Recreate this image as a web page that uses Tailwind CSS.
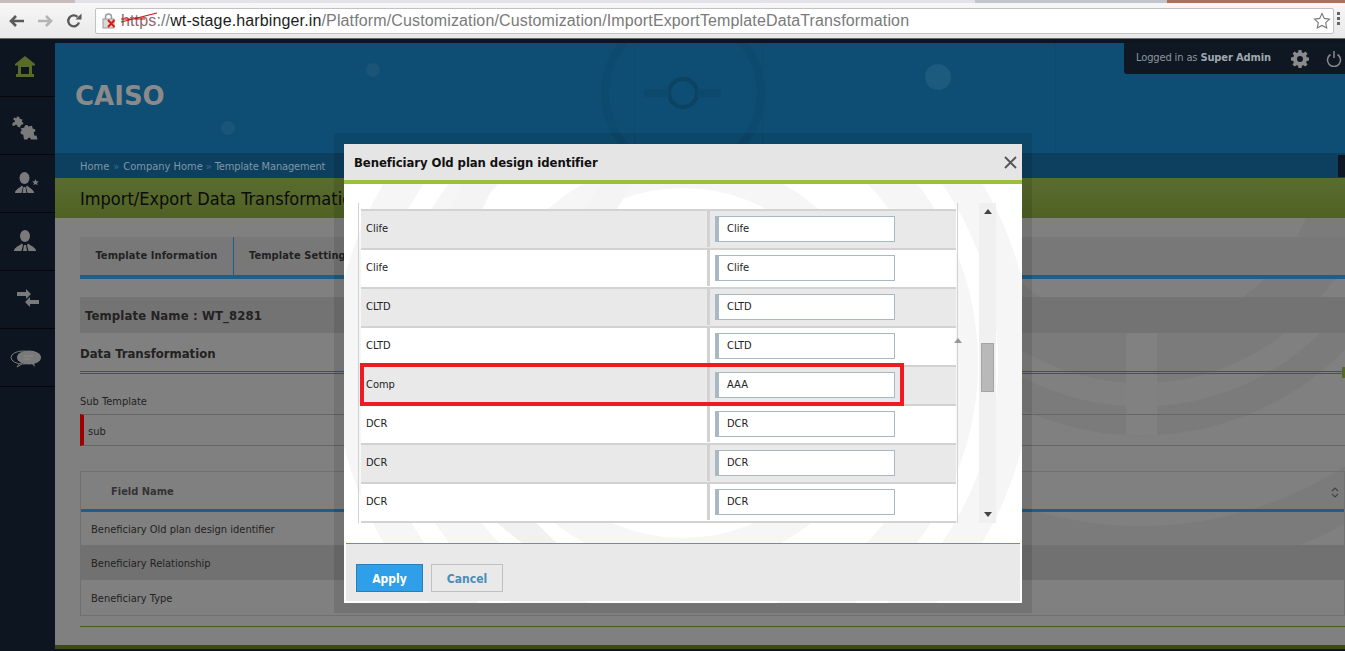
<!DOCTYPE html>
<html>
<head>
<meta charset="utf-8">
<script src="https://cdn.jsdelivr.net/npm/@tailwindcss/browser@4"></script>
</head>
<body class="m-0 overflow-hidden bg-[#0c1520] font-['DejaVu_Sans_Condensed','DejaVu_Sans',sans-serif]">
<div class="relative flex h-[651px] w-[1345px] flex-col overflow-hidden">
  <!-- browser chrome -->
  <header class="relative flex h-[39px] shrink-0 items-start bg-gradient-to-b from-[#f8f8f8] to-[#e9e9e9] pt-[8px] pl-[8px] border-b border-[#6a6a6a]">
    <div class="absolute left-0 right-0 top-0 flex h-[3px]">
      <div class="w-[75px] bg-[#c9bcbc]"></div><div class="w-[900px] bg-[#e2e2e8]"></div><div class="w-[192px] bg-[#c4c4cc]"></div><div class="flex-1 bg-[#a9705a]"></div>
    </div>
    <div class="flex h-[25px] w-[87px] items-center gap-[12px]">
      <svg width="17" height="14" viewBox="0 0 17 14"><path d="M16 7H4M8 2 3 7l5 5" fill="none" stroke="#5a5a5a" stroke-width="2.6"/></svg>
      <svg width="17" height="14" viewBox="0 0 17 14"><path d="M1 7h12M9 2l5 5-5 5" fill="none" stroke="#b4b4b4" stroke-width="2.6"/></svg>
      <svg width="16" height="16" viewBox="0 0 16 16"><path d="M13 9.500A5.500 5.500 0 1 1 11.500 3.800" fill="none" stroke="#5a5a5a" stroke-width="2.400"/><path d="M9.500 6.500h6v-6z" fill="#5a5a5a"/></svg>
    </div>
    <div class="flex h-[26px] w-[1239px] items-center rounded-[2px] border border-[#c2c2c2] bg-white pl-[6px] font-['Liberation_Sans',sans-serif] text-[16px] tracking-[0.135px] text-[#7a7a7a]">
      <svg class="shrink-0" width="17" height="17" viewBox="0 0 17 17"><rect x="1" y="6" width="11" height="9" fill="#d8d8d8" stroke="#9a9a9a"/><path d="M3.500 6V4a3 3 0 0 1 6 0v2" fill="none" stroke="#9a9a9a" stroke-width="1.500"/><path d="m6 7 6.500 7M12.500 7 6 14" stroke="#d81c1c" stroke-width="2"/></svg>
      <span class="relative ml-[2px] text-[#8c6a6a]">https<svg class="absolute left-0 top-[1px]" width="38" height="16" viewBox="0 0 38 16"><path d="M0 12 36 3M0 9h24" stroke="#c41616" stroke-width="1.200" fill="none"/></svg></span><span>://</span><span class="text-[#1c1c1c]">wt-stage.harbinger.in</span><span>/Platform/Customization/Customization/ImportExportTemplateDataTransformation</span>
      <svg class="ml-auto mr-[2px]" width="18" height="18" viewBox="0 0 18 18"><path d="m9 1.500 2.300 4.900 5.200.7-3.800 3.600 1 5.300L9 13.400l-4.700 2.600 1-5.300L1.500 7.100l5.200-.7z" fill="none" stroke="#777" stroke-width="1.100"/></svg>
    </div>
    <div class="ml-[3px] mt-[4px] flex flex-col gap-[2px]"><i class="block h-[3px] w-[3px] bg-[#666]"></i><i class="block h-[3px] w-[3px] bg-[#666]"></i><i class="block h-[3px] w-[3px] bg-[#666]"></i></div>
  </header>

  <div class="flex min-h-0 flex-1">
    <!-- sidebar -->
    <aside class="flex w-[55px] shrink-0 flex-col bg-[#0c1520]">
      <div class="flex h-[58px] items-center justify-center border-b border-[#04080c] pr-[5px] pb-[3px]">
        <svg width="20" height="21" viewBox="0 0 20 21"><path d="M10 0 0 8v1.500h20V8z" fill="#596b28"/><path d="M3 9h14v9h-3v-7H6v7H3z" fill="#596b28"/><rect x="1" y="18" width="18" height="3" fill="#596b28"/></svg>
      </div>
      <div class="flex h-[58px] items-center justify-center border-b border-[#04080c] pr-[5px] pt-[3px]">
        <svg width="28" height="26" viewBox="0 0 28 26" fill="#7a7a7a">
          <path d="M3 3.500 5.500 4.200C5.500 1.800 8.800 2 8.700 4.800L11.500 5.600 10.800 8C13 8 13 11 10 10.800L9 13.500 6.500 12.700C6.700 10.500 3.600 10.300 3.500 12L1 11.200 2 8.500C4.500 8.800 4.700 6 2.300 5.800z"/>
          <path d="M9.500 14.500 13.500 13.500C12.800 11 16.800 10 17.200 12.600L21 11.700 21.800 14.800C24.500 14 25.500 17.800 22.600 18.300L23.500 21.800 25.500 21.500 26.500 25.500 19.800 25.500C20 23.200 16.500 23.300 16.500 25.500L13 25.500 12.200 20.500C9.500 21 8.500 17 11 16.500z"/>
        </svg>
      </div>
      <div class="flex h-[58px] items-center justify-center border-b border-[#04080c] pr-px pb-[2px]">
        <svg width="25" height="22" viewBox="0 0 25 22" fill="#7a7a7a"><ellipse cx="9.500" cy="6" rx="5" ry="6"/><path d="M0 21c0-3 3-4 7-7.500l1 1.500-1.500 6zM19 21c0-3-3-4-7-7.500l-1 1.500 1.500 6zM8.500 15h2l1 6h-4z"/><path d="m20.500 7 1 2.200 2.300.2-1.800 1.500.6 2.300-2.100-1.200-2.100 1.200.6-2.300-1.800-1.500 2.300-.2z"/></svg>
      </div>
      <div class="flex h-[58px] items-center justify-center border-b border-[#04080c] pr-[6px] pb-[3px]">
        <svg width="22" height="21" viewBox="0 0 22 21" fill="#7a7a7a"><ellipse cx="11" cy="6" rx="5" ry="6"/><path d="M0 21c0-3 3-4 8-7.500l1 1.500-1.500 6zM22 21c0-3-3-4-8-7.500l-1 1.500 1.500 6zM10 15h2l1 6h-4z"/></svg>
      </div>
      <div class="flex h-[58px] items-center justify-center border-b border-[#04080c] pl-px pb-[3px]">
        <svg width="22" height="18" viewBox="0 0 22 18" fill="#7a7a7a"><path d="M0 3h9V0l5 5-5 5V7H0z"/><path d="M22 11h-9V8l-5 5 5 5v-3h9z"/></svg>
      </div>
      <div class="flex h-[58px] items-center justify-center border-b border-[#04080c] pr-[4px] pt-[3px]">
        <svg width="32" height="18" viewBox="0 0 32 18"><ellipse cx="13" cy="7.500" rx="12" ry="6.500" fill="none" stroke="#7a7a7a"/><path d="M9 14 7 17l5-3" fill="none" stroke="#7a7a7a"/><ellipse cx="19" cy="7.500" rx="12" ry="7" fill="#7a7a7a"/><path d="m22 14 3 3-1-4z" fill="#7a7a7a"/><path d="M14 6h9M14 9h6" stroke="#8c8c8c"/></svg>
      </div>
    </aside>

    <!-- main -->
    <main class="relative flex min-w-0 flex-1 flex-col bg-[#808080]">
      <div class="h-[4px] shrink-0 bg-[#0c1520]"></div>
      <!-- header band -->
      <section class="relative flex h-[110px] shrink-0 items-start overflow-hidden bg-[#0e4e74] pl-[20px] pt-[34px]">
        <svg class="absolute left-0 top-0" width="1290" height="110" viewBox="0 0 1290 110"><circle cx="628" cy="50" r="78" fill="none" stroke="#0d4a6f" stroke-width="8"/><circle cx="628" cy="50" r="14" fill="none" stroke="#0c4262" stroke-width="4"/><path d="M589 46h25v8h-25zM642 46h24v8h-24z" fill="#0d496c"/><path d="M579 0h1v110h-1zM707 0h1v110h-1zM1000 0h1v110h-1z" fill="#0d4a6e"/></svg>
        <i class="absolute left-[311px] top-[20px] block h-[14px] w-[14px] rounded-full bg-[#1a5578]"></i>
        <i class="absolute left-[166px] top-[78px] block h-[14px] w-[14px] rounded-full bg-[#1a5578]"></i>
        <i class="absolute left-[870px] top-[21px] block h-[26px] w-[26px] rounded-full bg-[#1c5a7e]"></i>
        <h1 class="relative font-['DejaVu_Sans',sans-serif] text-[26px] font-bold leading-[38px] text-[#8a8a8a]">CAISO</h1>
        <div class="absolute right-0 top-0 flex h-[31px] w-[221px] items-center rounded-bl-[3px] bg-[#0e1722] pl-[12px] text-[11px] tracking-[-0.12px] text-[#8c96a0]">
          <span>Logged in as <b class="text-[#a0a8b0]">Super Admin</b></span>
          <svg class="ml-[20px] shrink-0" width="18" height="18" viewBox="0 0 18 18"><path fill="#8a8a8a" fill-rule="evenodd" d="M7.500 0h3l.4 2.400 1.500.6 2-1.400 2.100 2.100-1.400 2 .6 1.500 2.300.4v3l-2.300.4-.6 1.500 1.400 2-2.100 2.100-2-1.400-1.500.6-.4 2.300h-3l-.4-2.300-1.500-.6-2 1.400-2.100-2.100 1.400-2-.6-1.500L0 10.500v-3l2.400-.4.6-1.500-1.400-2 2.100-2.100 2 1.400 1.500-.6zM9 6a3 3 0 1 0 0 6 3 3 0 0 0 0-6z"/></svg>
          <svg class="ml-[17px] shrink-0" width="16" height="17" viewBox="0 0 16 17"><path d="M4.500 4.500a6.500 6.500 0 1 0 7 0M8 1v7" fill="none" stroke="#8a8a8a" stroke-width="1.500"/></svg>
        </div>
      </section>
      <!-- breadcrumb -->
      <nav class="flex h-[25px] shrink-0 items-center bg-[#0d3f5e] pl-[25px] pt-[3px] text-[11px] text-[#7d97a8]">
        <span>Home</span><span class="mx-[4px] text-[#3f6d84]">»</span><span>Company Home</span><span class="mx-[3px] text-[#3f6d84]">»</span><span class="tracking-[-0.15px]">Template Management</span>
        <i class="ml-auto block h-full w-[7px] -mt-[3px] bg-[#0e1722]"></i>
      </nav>
      <!-- title -->
      <div class="flex h-[40px] shrink-0 items-center bg-gradient-to-b from-[#5b6c30] to-[#4f6123] pl-[25px] pt-[1px] text-[18px] text-[#0b0b0b]">Import/Export Data Transformation</div>

      <!-- content -->
      <div class="relative flex min-h-0 flex-1 flex-col overflow-hidden pl-[25px]">
        <svg class="absolute left-0 top-0" width="1290" height="433" viewBox="55 218 1290 433"><circle cx="1141" cy="151" r="205" fill="none" stroke="#7b7b7b" stroke-width="54"/><circle cx="1141" cy="151" r="270" fill="none" stroke="#7b7b7b" stroke-width="29"/><circle cx="1141" cy="151" r="400" fill="none" stroke="#7b7b7b" stroke-width="50"/><rect x="1126" y="333" width="31" height="102" fill="#818181"/></svg>
        <div class="relative mt-[19px] flex h-[42px] shrink-0 border-b-4 border-[#1f5e87] bg-[#787878] pt-px text-[11px] font-bold tracking-[0.1px] text-[#222]">
          <div class="flex w-[154px] items-center justify-center border-r border-[#1f5e87] -mt-px pt-px">Template Information</div>
          <div class="flex items-center pl-[15px]">Template Settings</div>
        </div>
        <div class="relative mt-[18px] flex h-[36px] shrink-0 items-center bg-[#737373] pl-[5px] pt-px text-[13px] font-bold tracking-[0.13px] text-[#222]">Template Name : WT_8281</div>
        <h2 class="relative mt-[12px] h-[18px] shrink-0 pt-px text-[13px] font-bold leading-[16px] text-[#222]">Data Transformation</h2>
        <div class="relative mt-[8px] h-[3px] shrink-0 border-y border-[#4b5b1e]"><i class="absolute right-0 top-[-5px] block h-[11px] w-[3px] bg-[#55691f]"></i></div>
        <div class="relative mt-[21px] h-[14px] shrink-0 text-[11px] leading-[14px] text-[#222]">Sub Template</div>
        <div class="relative mt-[5px] flex h-[32px] shrink-0 items-center border-y border-[#666] border-l-4 border-l-[#a00000] pl-[4px] pt-[4px] text-[11px] text-[#222]">sub</div>
        <div class="relative mt-[25px] flex h-[145px] shrink-0 flex-col border border-[#707070] text-[11px] text-[#222]">
          <div class="flex h-[37px] shrink-0 items-center justify-between pl-[30px] pr-[5px] pt-[4px] font-bold text-[#333]"><span>Field Name</span><svg width="8" height="11" viewBox="0 0 8 11"><path d="m1 4 3-3 3 3M1 7l3 3 3-3" fill="none" stroke="#444" stroke-width="1.200"/></svg></div>
          <div class="h-[3px] shrink-0 bg-[#1f5e87]"></div>
          <div class="flex h-[33px] shrink-0 items-center pl-[10px] pt-[4px]">Beneficiary Old plan design identifier</div>
          <div class="flex h-[35px] shrink-0 items-center bg-[#717171] pl-[10px] pt-[4px]">Beneficiary Relationship</div>
          <div class="flex h-[35px] shrink-0 items-center pl-[10px] pt-[4px]">Beneficiary Type</div>
        </div>
        <div class="relative mt-[10px] h-px shrink-0 bg-[#4b5b1e]"></div>
        <div class="relative mt-auto h-[4px] shrink-0 bg-[#3d4a18] -ml-[25px]"></div>
        <div class="relative h-[2px] shrink-0 bg-[#0c1520] -ml-[25px]"></div>
      </div>
    </main>
  </div>

  <!-- modal dim frame -->
  <div class="absolute left-[334px] top-[133px] h-[480px] w-[698px] bg-black/10"></div>
  <!-- modal -->
  <div class="absolute left-[344px] top-[144px] flex h-[459px] w-[678px] flex-col overflow-hidden bg-white text-[11px] text-[#222]">
    <svg class="absolute left-0 top-0" width="678" height="459" viewBox="0 0 678 459"><circle cx="339" cy="219" r="276" fill="none" stroke="#f6f6f6" stroke-width="38"/><circle cx="339" cy="219" r="332" fill="none" stroke="#f6f6f6" stroke-width="34"/><circle cx="339" cy="219" r="190" fill="none" stroke="#f6f6f6" stroke-width="30"/><path d="M118 40 100 80h32l18-40zM258 40l-30 40h36l24-40z" fill="#f4f4f4"/><path d="M148 375l30 24h35l-25-24z" fill="#f1f1f1"/></svg>
    <div class="relative flex h-[40px] shrink-0 items-center justify-between border-b-4 border-[#9bc13c] bg-[#e5e5e5] pl-[10px] pr-[5px] pt-px text-[13px] font-bold tracking-[-0.08px] text-[#111]">
      <span>Beneficiary Old plan design identifier</span>
      <svg width="13" height="13" viewBox="0 0 13 13"><path d="m1 1 11 11M12 1 1 12" stroke="#555" stroke-width="1.800"/></svg>
    </div>
    <div class="relative mt-[19px] flex h-[320px] shrink-0 pl-[14px]">
      <div class="flex w-[600px] shrink-0 flex-col border-l border-r border-[#d2d2d2] pl-[2px] pr-px pt-[6px]">
        <div class="grid h-[39px] shrink-0 grid-cols-[348px_1fr] bg-[#e9e9e9] pb-px">
          <div class="flex items-center border-t-2 border-r-2 border-[#d2d2d2] pl-[5px]">Clife</div>
          <div class="flex items-center border-t-2 border-l border-[#d2d2d2] pl-[5px]"><div class="flex h-[26px] w-[180px] items-center border border-l-4 border-[#a9b9c3] bg-white pl-[8px]">Clife</div></div>
        </div>
        <div class="grid h-[39px] shrink-0 grid-cols-[348px_1fr] bg-white pb-px">
          <div class="flex items-center border-t-2 border-r-2 border-[#d2d2d2] pl-[5px]">Clife</div>
          <div class="flex items-center border-t-2 border-l border-[#d2d2d2] pl-[5px]"><div class="flex h-[26px] w-[180px] items-center border border-l-4 border-[#a9b9c3] bg-white pl-[8px]">Clife</div></div>
        </div>
        <div class="grid h-[39px] shrink-0 grid-cols-[348px_1fr] bg-[#e9e9e9] pb-px">
          <div class="flex items-center border-t-2 border-r-2 border-[#d2d2d2] pl-[5px]">CLTD</div>
          <div class="flex items-center border-t-2 border-l border-[#d2d2d2] pl-[5px]"><div class="flex h-[26px] w-[180px] items-center border border-l-4 border-[#a9b9c3] bg-white pl-[8px]">CLTD</div></div>
        </div>
        <div class="grid h-[39px] shrink-0 grid-cols-[348px_1fr] bg-white pb-px">
          <div class="flex items-center border-t-2 border-r-2 border-[#d2d2d2] pl-[5px]">CLTD</div>
          <div class="flex items-center border-t-2 border-l border-[#d2d2d2] pl-[5px]"><div class="flex h-[26px] w-[180px] items-center border border-l-4 border-[#a9b9c3] bg-white pl-[8px]">CLTD</div></div>
        </div>
        <div class="grid h-[39px] shrink-0 grid-cols-[348px_1fr] bg-[#e9e9e9] pb-px">
          <div class="flex items-center border-t-2 border-r-2 border-[#d2d2d2] pl-[5px]">Comp</div>
          <div class="flex items-center border-t-2 border-l border-[#d2d2d2] pl-[5px]"><div class="flex h-[26px] w-[180px] items-center border border-l-4 border-[#a9b9c3] bg-white pl-[8px]">AAA</div></div>
        </div>
        <div class="grid h-[39px] shrink-0 grid-cols-[348px_1fr] bg-white pb-px">
          <div class="flex items-center border-t-2 border-r-2 border-[#d2d2d2] pl-[5px]">DCR</div>
          <div class="flex items-center border-t-2 border-l border-[#d2d2d2] pl-[5px]"><div class="flex h-[26px] w-[180px] items-center border border-l-4 border-[#a9b9c3] bg-white pl-[8px]">DCR</div></div>
        </div>
        <div class="grid h-[39px] shrink-0 grid-cols-[348px_1fr] bg-[#e9e9e9] pb-px">
          <div class="flex items-center border-t-2 border-r-2 border-[#d2d2d2] pl-[5px]">DCR</div>
          <div class="flex items-center border-t-2 border-l border-[#d2d2d2] pl-[5px]"><div class="flex h-[26px] w-[180px] items-center border border-l-4 border-[#a9b9c3] bg-white pl-[8px]">DCR</div></div>
        </div>
        <div class="grid h-[41px] shrink-0 grid-cols-[348px_1fr] border-b-2 border-[#d2d2d2] bg-white pb-px">
          <div class="flex items-center border-t-2 border-r-2 border-[#d2d2d2] pl-[5px]">DCR</div>
          <div class="flex items-center border-t-2 border-l border-[#d2d2d2] pl-[5px]"><div class="flex h-[26px] w-[180px] items-center border border-l-4 border-[#a9b9c3] bg-white pl-[8px]">DCR</div></div>
        </div>
      </div>
      <svg class="absolute left-[610px] top-[135px]" width="8" height="5" viewBox="0 0 8 5"><path d="M4 0 8 5H0z" fill="#999"/></svg>
      <div class="relative ml-[21px] flex h-[320px] w-[17px] shrink-0 flex-col items-center bg-[#f0f0f0]">
        <svg class="mt-[6px]" width="8" height="5" viewBox="0 0 8 5"><path d="M4 0 8 5H0z" fill="#444"/></svg>
        <div class="absolute left-[2px] top-[140px] h-[49px] w-[13px] border border-[#a5a5a5] bg-[#b9b9b9]"></div>
        <svg class="mb-[6px] mt-auto" width="8" height="5" viewBox="0 0 8 5"><path d="M4 5 8 0H0z" fill="#444"/></svg>
      </div>
    </div>
    <div class="relative mx-[2px] mb-[2px] mt-[20px] flex flex-1 items-start gap-[8px] border-t border-[#7c9a3e] bg-[#e9e9e9] pl-[10px] pt-[20px] text-[12px] font-bold">
      <button class="flex h-[28px] w-[67px] items-center justify-center border border-[#2a80b5] bg-[#2f9fe9] pt-px text-white">Apply</button>
      <button class="flex h-[28px] w-[72px] items-center justify-center border border-[#c0c0c0] pt-px text-[#4a8db8]">Cancel</button>
    </div>
  </div>
  <!-- red annotation -->
  <div class="absolute left-[360px] top-[363px] h-[43px] w-[544px] border-4 border-[#ed1c24]"></div>
</div>
</body>
</html>
